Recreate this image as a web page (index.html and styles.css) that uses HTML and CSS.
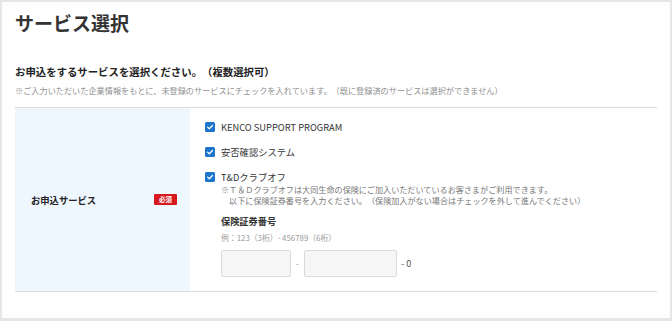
FILE: index.html
```html
<!DOCTYPE html>
<html lang="ja">
<head>
<meta charset="utf-8">
<title>サービス選択</title>
<link rel="stylesheet" href="styles.css">
</head>
<body>
<div class="card">
  <h1 class="title">サービス選択</h1>
  <p class="lead">お申込をするサービスを選択ください。（複数選択可）</p>
  <p class="note">※ご入力いただいた企業情報をもとに、未登録のサービスにチェックを入れています。（既に登録済のサービスは選択ができません）</p>
  <div class="table">
    <div class="row">
      <div class="head">
        <span class="head-label">お申込サービス</span>
        <span class="badge">必須</span>
      </div>
      <div class="body">
        <label class="check">
          <span class="box"><svg viewBox="0 0 10 10" width="10" height="10"><path d="M2.6 5.1 L4.3 6.7 L7.5 3.5" fill="none" stroke="#fff" stroke-width="1.3" stroke-linecap="round" stroke-linejoin="round"/></svg></span>
          <span class="check-text">KENCO SUPPORT PROGRAM</span>
        </label>
        <label class="check">
          <span class="box"><svg viewBox="0 0 10 10" width="10" height="10"><path d="M2.6 5.1 L4.3 6.7 L7.5 3.5" fill="none" stroke="#fff" stroke-width="1.3" stroke-linecap="round" stroke-linejoin="round"/></svg></span>
          <span class="check-text">安否確認システム</span>
        </label>
        <label class="check check-last">
          <span class="box"><svg viewBox="0 0 10 10" width="10" height="10"><path d="M2.6 5.1 L4.3 6.7 L7.5 3.5" fill="none" stroke="#fff" stroke-width="1.3" stroke-linecap="round" stroke-linejoin="round"/></svg></span>
          <span class="check-text">T&amp;Dクラブオフ</span>
        </label>
        <div class="sub">
          <p class="sub-note">※Ｔ＆Ｄクラブオフは大同生命の保険にご加入いただいているお客さまがご利用できます。<br>　以下に保険証券番号を入力ください。（保険加入がない場合はチェックを外して進んでください）</p>
          <p class="field-label">保険証券番号</p>
          <p class="example">例：123（3桁）- 456789（6桁）</p>
          <div class="inputs">
            <input class="input input-a" type="text">
            <span class="sep">-</span>
            <input class="input input-b" type="text">
            <span class="suffix">- 0</span>
          </div>
        </div>
      </div>
    </div>
  </div>
</div>
</body>
</html>
```
FILE: styles.css
```css
* { box-sizing: border-box; }
html, body { margin: 0; padding: 0; }
body {
  background: #e6e6e6;
  padding: 2px 2px 3px 2px;
  font-family: "Noto Sans CJK JP", "Noto Sans", sans-serif;
  color: #333;
  text-spacing-trim: space-all;
}
.card {
  background: #fff;
  height: 316px;
  padding: 8px 13px 0 13px;
}
.title {
  margin: 0;
  font-size: 19px;
  line-height: 26px;
  font-weight: 700;
  color: #333;
}
.lead {
  margin: 28px 0 0 0;
  font-size: 10.4px;
  line-height: 16px;
  font-weight: 700;
  color: #222;
}
.note {
  margin: 5px 0 0 0;
  font-size: 8.17px;
  line-height: 12px;
  color: #8f8f8f;
}
.table {
  margin-top: 10px;
  border-top: 1px solid #dcdcdc;
  border-bottom: 1px solid #dcdcdc;
}
.row {
  display: flex;
  height: 183px;
}
.head {
  width: 175px;
  background: #eef6fe;
  display: flex;
  align-items: center;
  justify-content: space-between;
  padding: 0 13px 0 16px;
}
.head-label {
  font-size: 9.3px;
  font-weight: 700;
  color: #222;
}
.badge {
  background: #d7191f;
  color: #fff;
  font-size: 6.5px;
  font-weight: 700;
  line-height: 11px;
  width: 23px;
  text-align: center;
  border-radius: 1px;
}
.body {
  flex: 1;
  padding: 12px 0 0 15px;
}
.check {
  display: flex;
  align-items: center;
  height: 14px;
  margin-bottom: 11px;
}
.check-last { margin-bottom: 0; }
.box {
  width: 10px;
  height: 10px;
  background: #1d74cd;
  border-radius: 1.5px;
  display: flex;
  margin-right: 6px;
}
.check-text {
  font-size: 9.3px;
  color: #333;
}
.sub {
  padding-left: 16px;
}
.sub-note {
  margin: 0;
  font-size: 8.12px;
  line-height: 11px;
  color: #777;
}
.field-label {
  margin: 9px 0 0 0;
  font-size: 9.2px;
  line-height: 13px;
  font-weight: 700;
  color: #333;
}
.example {
  margin: 4px 0 0 0;
  font-size: 7.85px;
  line-height: 11px;
  color: #999;
}
.inputs {
  margin-top: 7px;
  display: flex;
  align-items: center;
}
.input {
  height: 27px;
  background: #f6f6f6;
  border: 1px solid #dadada;
  border-radius: 2px;
  padding: 0;
  margin: 0;
}
.input-a { width: 70px; }
.input-b { width: 93px; }
.sep {
  width: 13px;
  text-align: center;
  font-size: 8px;
  color: #888;
}
.suffix {
  margin-left: 4px;
  font-size: 9px;
  color: #555;
}
```
